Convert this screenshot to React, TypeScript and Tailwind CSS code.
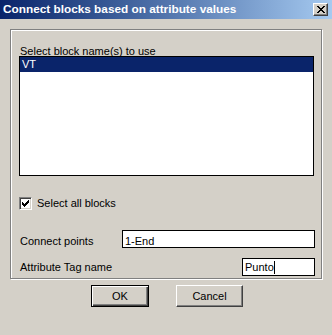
import React from "react";

const font = { fontFamily: '"Liberation Sans", Arial, sans-serif' };

function PixelGlyph({ rows, w, h }: { rows: string[]; w: number; h: number }) {
  return (
    <svg width={w} height={h} viewBox={`0 0 ${w} ${h}`} shapeRendering="crispEdges">
      {rows.flatMap((r, y) =>
        r.split("").map((c, x) =>
          c === "x" ? <rect key={`${x}-${y}`} x={x} y={y} width="1" height="1" fill="#000" /> : null
        )
      )}
    </svg>
  );
}

const closeRows = [
  "xx....xx",
  ".xx..xx.",
  "..xxxx..",
  "...xx...",
  "..xxxx..",
  ".xx..xx.",
  "xx....xx",
];

const checkRows = [
  "......x",
  ".....xx",
  "x...xxx",
  "xx.xxx.",
  "xxxxx..",
  ".xxx...",
  "..x....",
];

export default function App() {
  return (
    <div
      className="w-[332px] h-[335px] bg-[#d4d0c8] flex flex-col overflow-hidden text-black"
      style={font}
    >
      {/* Title bar */}
      <div className="h-[19px] shrink-0 bg-gradient-to-r from-[#0a246a] to-[#a6caf0] flex items-center justify-between pl-[3px] pr-[4px]">
        <span className="text-white font-bold text-[11.8px] leading-[19px] whitespace-nowrap">
          Connect blocks based on attribute values
        </span>
        <div className="w-[15px] h-[13px] bg-[#d4d0c8] border-t border-l border-t-white border-l-white border-r border-b border-r-[#404040] border-b-[#404040] shadow-[inset_-1px_-1px_0_#808080] flex items-center justify-center">
          <PixelGlyph rows={closeRows} w={8} h={7} />
        </div>
      </div>

      {/* Group box */}
      <div className="mt-[10px] ml-[10px] w-[312px] h-[250px] shrink-0 border border-[#808080] shadow-[inset_1px_1px_0_#fff,1px_1px_0_#fff] pt-[13px] pl-[8px] flex flex-col text-[11px]">
        <div className="h-[13px] leading-[17px] pl-[1px] whitespace-nowrap">Select block name(s) to use</div>
        <div className="w-[295px] h-[120px] border border-black bg-white flex flex-col">
          <div className="h-[15px] bg-[#0a246a] text-white leading-[15px] pl-[2px]">VT</div>
        </div>

        <div className="mt-[21px] flex items-center h-[13px]">
          <div className="w-[13px] h-[13px] bg-white border-t border-l border-t-[#808080] border-l-[#808080] border-r border-b border-r-white border-b-white shadow-[inset_1px_1px_0_#404040,inset_-1px_-1px_0_#d4d0c8] flex items-center justify-center">
            <PixelGlyph rows={checkRows} w={7} h={7} />
          </div>
          <span className="ml-[5px] leading-[13px]">Select all blocks</span>
        </div>

        <div className="mt-[20px] flex h-[18px]">
          <span className="self-end pl-[1px] w-[103px] leading-[13px]">Connect points</span>
          <div className="w-[193px] h-[18px] border border-black bg-white leading-[14px] pt-[3px] pl-[2px]">1-End</div>
        </div>

        <div className="mt-[10px] flex items-center h-[18px]">
          <span className="pl-[1px] w-[223px] leading-[13px] whitespace-nowrap">Attribute Tag name</span>
          <div className="w-[73px] h-[18px] border border-black bg-white leading-[16px] pl-[2px] flex items-center">
            <span>Punto</span>
            <span className="w-px h-[13px] bg-black" />
          </div>
        </div>
      </div>

      {/* Buttons */}
      <div className="mt-[6px] ml-[91px] flex gap-[27px] text-[11px]">
        <div className="w-[58px] h-[22px] border border-black shadow-[inset_1px_1px_0_#fff,inset_-1px_-1px_0_#404040,inset_-2px_-2px_0_#808080] flex items-center justify-center">
          OK
        </div>
        <div className="w-[67px] h-[22px] border-t border-l border-t-white border-l-white border-r border-b border-r-[#404040] border-b-[#404040] shadow-[inset_-1px_-1px_0_#808080] flex items-center justify-center">
          Cancel
        </div>
      </div>
    </div>
  );
}
